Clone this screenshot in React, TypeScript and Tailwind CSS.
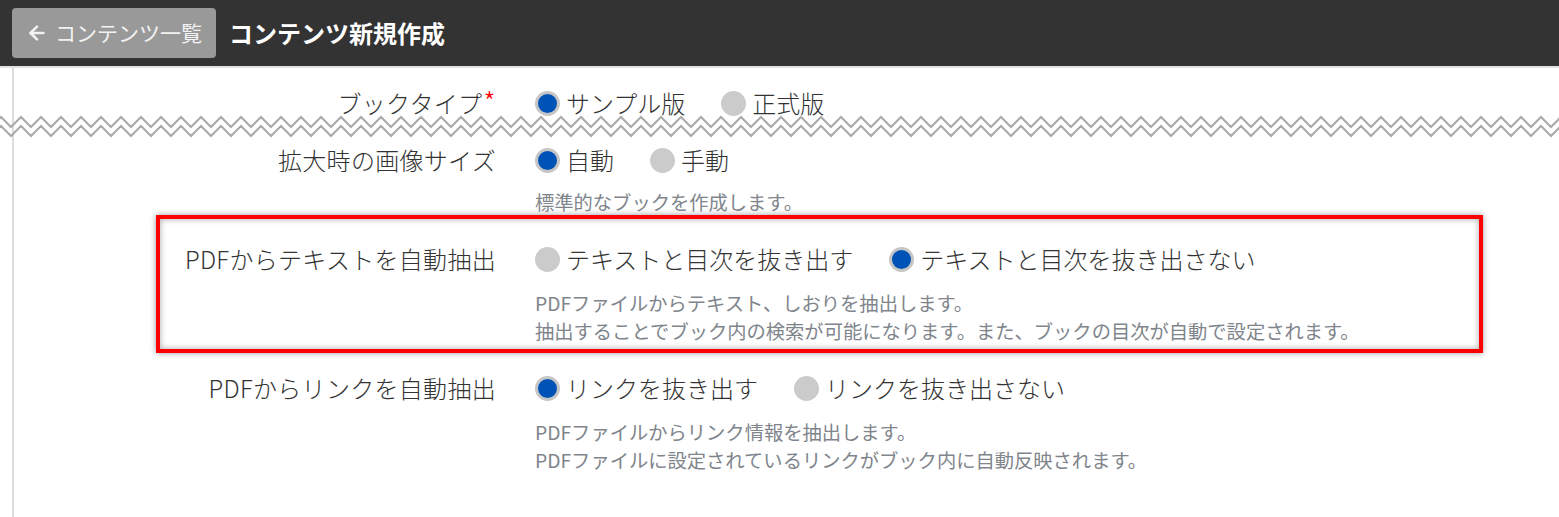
import React from 'react';
import { ArrowLeft } from 'lucide-react';

type Option = { label: string; checked?: boolean };

function Radio({ label, checked }: Option) {
  return (
    <label className="flex items-center gap-[6px]">
      {checked ? (
        <span className="w-[25px] h-[25px] rounded-full bg-[#0053b6] border-[3px] border-[#c6c6c6] shrink-0" />
      ) : (
        <span className="w-[25px] h-[25px] rounded-full bg-[#cbcbcb] shrink-0" />
      )}
      <span>{label}</span>
    </label>
  );
}

interface FieldRowProps {
  label: string;
  required?: boolean;
  labelWidth: string;
  options: Option[];
  help?: string[];
  helpGap?: string;
}

function FieldRow({ label, required, labelWidth, options, help, helpGap = 'mt-[14px]' }: FieldRowProps) {
  return (
    <div className="flex">
      <div className={`${labelWidth} h-8 flex items-center justify-end shrink-0 tracking-[0.3px]`}>
        {label}
        {required && <span className="text-[#ff0000] text-[28px] leading-none -mt-[4px] ml-px">*</span>}
      </div>
      <div className="ml-[39px]">
        <div className="h-8 flex items-center gap-[36px]">
          {options.map((o) => (
            <Radio key={o.label} {...o} />
          ))}
        </div>
        {help && (
          <div className={`${helpGap} text-[19.3px] leading-[28px] font-normal text-[#80858c]`}>
            {help.map((h) => (
              <p key={h}>{h}</p>
            ))}
          </div>
        )}
      </div>
    </div>
  );
}

// torn-edge marker across the page
function Zigzag() {
  const line = (dy: number) => {
    const pts: string[] = [];
    for (let i = 0, x = -9; x <= 1571; i++, x += 10) {
      pts.push(`${x},${(i % 2 === 0 ? 12 : 2) + dy}`);
    }
    return pts.join(' ');
  };
  return (
    <svg className="-ml-[14px] block" width="1559" height="24" viewBox="0 0 1559 24">
      <polyline points={line(0)} fill="none" stroke="#aaaaaa" strokeWidth="2" />
      <polyline points={line(9)} fill="none" stroke="#aaaaaa" strokeWidth="2" />
    </svg>
  );
}

export default function App() {
  return (
    <div className="w-[1559px] h-[517px] bg-white overflow-hidden text-[#333] text-[24px] font-light font-['Noto_Sans_CJK_JP','Noto_Sans',sans-serif]">
      <header className="h-[68px] bg-[#333] border-b-2 border-[#e2e2e2] flex items-center px-3 gap-[13px]">
        <button className="h-[50px] w-[204px] rounded-[4px] bg-[#999] text-[#f2f2f2] text-[21px] font-normal flex items-center pl-[14px] gap-[7px]">
          <ArrowLeft className="w-[22px] h-[22px]" strokeWidth={2.8} />
          <span>コンテンツ一覧</span>
        </button>
        <h1 className="text-white font-bold text-[24px]">コンテンツ新規作成</h1>
      </header>

      <div className="ml-3 border-l-2 border-[#dcdcdc] pt-[19px] h-[449px]">
        <div className="h-[30px] -mb-[2px] flex flex-col justify-start">
          <FieldRow
            label="ブックタイプ"
            required
            labelWidth="w-[482px]"
            options={[{ label: 'サンプル版', checked: true }, { label: '正式版' }]}
          />
        </div>
        <Zigzag />
        <div className="mt-[5px]">
          <FieldRow
            label="拡大時の画像サイズ"
            labelWidth="w-[482px]"
            helpGap="mt-[12px]"
            options={[{ label: '自動', checked: true }, { label: '手動' }]}
            help={['標準的なブックを作成します。']}
          />
        </div>

        <div className="-mt-px ml-[142px] w-[1327px] border-4 border-[#ff0000] pt-[24px] pb-[4px] shadow-[0_0_6px_rgba(0,0,0,0.4),inset_0_0_6px_rgba(0,0,0,0.35)]">
          <FieldRow
            label="PDFからテキストを自動抽出"
            labelWidth="w-[336px]"
            options={[{ label: 'テキストと目次を抜き出す' }, { label: 'テキストと目次を抜き出さない', checked: true }]}
            help={[
              'PDFファイルからテキスト、しおりを抽出します。',
              '抽出することでブック内の検索が可能になります。また、ブックの目次が自動で設定されます。',
            ]}
          />
        </div>

        <div className="mt-[19px]">
          <FieldRow
            label="PDFからリンクを自動抽出"
            labelWidth="w-[482px]"
            options={[{ label: 'リンクを抜き出す', checked: true }, { label: 'リンクを抜き出さない' }]}
            help={[
              'PDFファイルからリンク情報を抽出します。',
              'PDFファイルに設定されているリンクがブック内に自動反映されます。',
            ]}
          />
        </div>
      </div>
    </div>
  );
}
